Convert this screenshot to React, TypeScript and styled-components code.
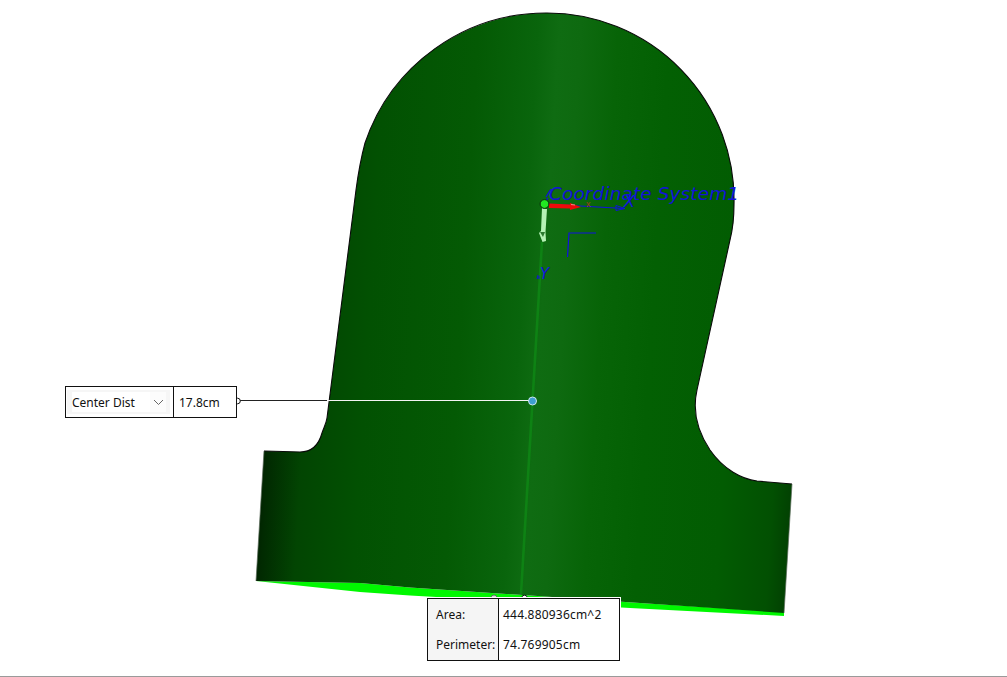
import React from "react";
import styled, { createGlobalStyle } from "styled-components";

const GlobalStyle = createGlobalStyle`
    html, body {
        margin: 0;
        padding: 0;
        background: #fff;
        overflow: hidden;
    }
`;

const shadeStops: [number, string][] = [
    [0, "#011f01"],
    [0.017, "#012a01"],
    [0.08, "#024502"],
    [0.19, "#025102"],
    [0.36, "#045a04"],
    [0.47, "#09650c"],
    [0.51, "#0f6c12"],
    [0.55, "#0e6a10"],
    [0.62, "#076407"],
    [0.715, "#036003"],
    [0.865, "#025c02"],
    [0.96, "#025002"],
    [1, "#023f02"],
];

const OUTLINE =
    "M264 451 L283 451.5 L300 452 C312 452 319 444 322 433 C324 427 326 424 327 418 L356 190 " +
    "C358 175 361 158 365 143 A191 191 0 0 1 547 13 A187 187 0 0 1 734 205 C734 220 733 228 730 240 L697 390 " +
    "C692 412 698 432 710 450 C724 470 742 479 757 481 L792 484";

const App = () => {
    return (
        <>
            <GlobalStyle />
            <Page>
                <Viewport>
                    <ModelDrawing viewBox="0 0 1007 676">
                        <defs>
                            <linearGradient
                                id="bodyShade"
                                gradientUnits="userSpaceOnUse"
                                x1="256"
                                y1="500"
                                x2="792"
                                y2="533"
                            >
                                {shadeStops.map(([at, color]) => (
                                    <stop key={at} offset={at} stopColor={color} />
                                ))}
                            </linearGradient>
                        </defs>

                        {/* bottom face */}
                        <path
                            d="M256 581 L360 592 L410 595.5 L630 608 L784 616 L784 612 L640 603 L410 587.5 L360 583 Z"
                            fill="#00f800"
                        />
                        {/* extruded body */}
                        <path
                            d={`${OUTLINE} L784 613 L640 603 L410 587.5 L360 583 L256 581 Z`}
                            fill="url(#bodyShade)"
                        />
                        <path d={OUTLINE} fill="none" stroke="#0a0a0a" strokeWidth="1.1" />
                        <path d="M264 451 L256 581 M792 484 L784 613" fill="none" stroke="#5a6a5a" strokeWidth="0.7" />

                        {/* centre line */}
                        <path d="M542 242 L521 594" stroke="#0e8214" strokeWidth="2.6" fill="none" />

                        {/* leader to the centre point */}
                        <path d="M240 400.5 H327" stroke="#222" strokeWidth="1" fill="none" />
                        <path d="M327 400.5 H530" stroke="#f4f4f4" strokeWidth="1" fill="none" />
                        <circle cx="532.5" cy="401" r="4" fill="#3f9fcf" stroke="#cfe6ef" strokeWidth="1" />
                        <circle cx="237.5" cy="401" r="2.8" fill="#fff" stroke="#111" strokeWidth="1" />

                        {/* coordinate system triad */}
                        <path d="M545 204 L624 208.5" stroke="#1010e0" strokeWidth="1" fill="none" />
                        <path d="M616 205.5 L625 208.5 L616 210.5 Z" fill="none" stroke="#1010e0" strokeWidth="1" />
                        <path d="M596 233 H569 L567.5 257" stroke="#1010e0" strokeWidth="1.2" fill="none" />
                        <path d="M546 197 L551 189 M543 204 L548 198" stroke="#1010e0" strokeWidth="1.4" fill="none" />
                        <path d="M549 203.5 L570 204.5 L570 203 L581 207 L570 210 L570 208.5 L549 208 Z" fill="#ee0a0a" />
                        <path d="M571 204.5 L575 205" stroke="#f08a8a" strokeWidth="1" />
                        <path
                            d="M542 208 L547 209 L545.5 232 L546 241 L542.5 242 L539 233 L541 231 Z"
                            fill="#b5f2b5"
                        />
                        <path d="M540 232 L545 232 L543 237 Z" fill="#2c7a30" />
                        <circle cx="544.5" cy="204" r="4.4" fill="#22e822" stroke="#0a2a0a" strokeWidth="1" />
                        <CoordinateLabel x="549" y="200">Coordinate System1</CoordinateLabel>
                        <AxisLabel x="624" y="207" fontSize="16">X</AxisLabel>
                        <AxisLabel x="540" y="279" fontSize="15">Y</AxisLabel>
                        <SmallAxisLabel x="586" y="207">x</SmallAxisLabel>
                        <path d="M537 279 L538 275 M539 279 L539 276" stroke="#1010e0" strokeWidth="1" />

                        {/* grips on the area callout */}
                        <path d="M491 598 A3 3 0 0 1 497 598 Z" fill="#d8d8d8" stroke="#555" strokeWidth="0.8" />
                        <circle cx="524.5" cy="598" r="2.8" fill="#fff" stroke="#111" strokeWidth="1" />
                    </ModelDrawing>

                    <DimensionCallout>
                        <UnitCell>
                            <UnitSelect>
                                <UnitName>Center Dist</UnitName>
                                <ChevronBox>
                                    <svg width="11" height="7" viewBox="0 0 11 7">
                                        <path d="M1 1 L5.5 5.5 L10 1" fill="none" stroke="#666" strokeWidth="1" />
                                    </svg>
                                </ChevronBox>
                            </UnitSelect>
                        </UnitCell>
                        <DimensionValue>17.8cm</DimensionValue>
                    </DimensionCallout>

                    <MeasureCallout>
                        <MeasureLabels>
                            <MeasureCell>Area:</MeasureCell>
                            <MeasureCell>Perimeter:</MeasureCell>
                        </MeasureLabels>
                        <MeasureValues>
                            <MeasureCell>444.880936cm^2</MeasureCell>
                            <MeasureCell>74.769905cm</MeasureCell>
                        </MeasureValues>
                    </MeasureCallout>
                </Viewport>
                <BottomRule />
            </Page>
        </>
    );
};

export default App;

const Page = styled.div`
    width: 1007px;
    height: 677px;
    display: flex;
    flex-direction: column;
    background: #fff;
    font-family: "Noto Sans", "Open Sans", sans-serif;
    font-size: 12px;
    color: #111;
`;

const Viewport = styled.div`
    position: relative;
    flex: 1;
`;

const BottomRule = styled.div`
    height: 1px;
    background: #9a9a9a;
`;

const ModelDrawing = styled.svg`
    position: absolute;
    inset: 0;
    width: 1007px;
    height: 676px;
    display: block;
`;

const CoordinateLabel = styled.text`
    font-family: "DejaVu Sans", sans-serif;
    font-style: italic;
    font-weight: 200;
    font-size: 18.5px;
    letter-spacing: 0.1px;
    fill: #1212d8;
`;

const AxisLabel = styled.text`
    font-family: "DejaVu Sans", sans-serif;
    font-style: italic;
    font-weight: 200;
    fill: #1212e0;
`;

const SmallAxisLabel = styled.text`
    font-family: "Liberation Sans", sans-serif;
    font-size: 9px;
    fill: #a03a20;
`;

const DimensionCallout = styled.div`
    position: absolute;
    left: 65px;
    top: 386px;
    width: 172px;
    height: 32px;
    box-sizing: border-box;
    display: flex;
    background: #fff;
    border: 1px solid #111;
`;

const UnitCell = styled.div`
    width: 108px;
    box-sizing: border-box;
    display: flex;
    align-items: center;
    border-right: 1px solid #111;
    padding: 0 3px 0 1px;
`;

const UnitSelect = styled.div`
    flex: 1;
    height: 20px;
    display: flex;
    align-items: stretch;
    padding: 2px 4px 2px 5px;
    background: #f6f6f6;
`;

const UnitName = styled.div`
    flex: 1;
    display: flex;
    align-items: center;
    background: #fff;
    white-space: nowrap;
`;

const ChevronBox = styled.div`
    width: 16px;
    display: flex;
    align-items: center;
    justify-content: center;
    background: #fcfcfc;
`;

const DimensionValue = styled.div`
    flex: 1;
    display: flex;
    align-items: center;
    padding-left: 5px;
`;

const MeasureCallout = styled.div`
    position: absolute;
    left: 427px;
    top: 598px;
    width: 193px;
    height: 63px;
    box-sizing: border-box;
    display: flex;
    background: #fff;
    border: 1px solid #111;
    outline: 1px solid #fff;
`;

const MeasureLabels = styled.div`
    width: 71px;
    box-sizing: border-box;
    display: grid;
    grid-template-rows: 1fr 1fr;
    padding-left: 8px;
    background: #f5f5f5;
    border-right: 1px solid #111;
`;

const MeasureValues = styled.div`
    flex: 1;
    display: grid;
    grid-template-rows: 1fr 1fr;
    padding-left: 4px;
    letter-spacing: 0.2px;
`;

const MeasureCell = styled.div`
    display: flex;
    align-items: center;
    white-space: nowrap;
`;
